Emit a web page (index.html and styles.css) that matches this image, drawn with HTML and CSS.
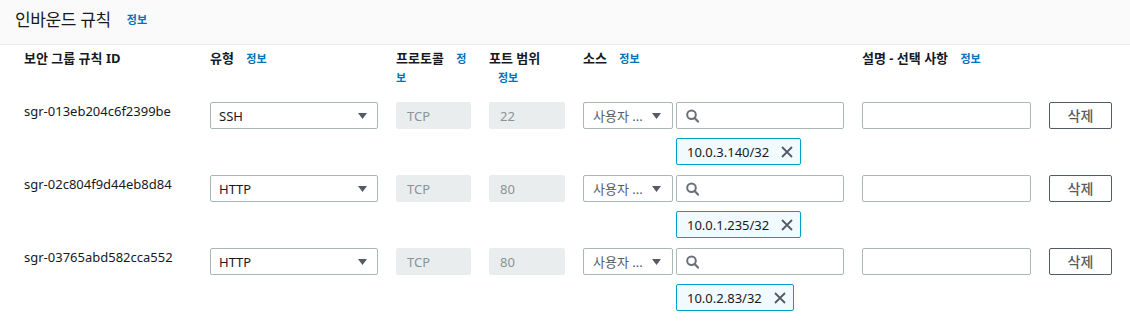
FILE: index.html
```html
<!DOCTYPE html>
<html lang="ko">
<head>
<meta charset="utf-8">
<title>인바운드 규칙</title>
<link rel="stylesheet" href="styles.css">
</head>
<body>
<div class="panel">
  <div class="panel-head">
    <h2 class="title">인바운드 규칙</h2>
    <span class="info head-info">정보</span>
  </div>
  <div class="rules">
    <div class="th">보안 그룹 규칙 ID</div>
    <div class="th">유형 <span class="info">정보</span></div>
    <div class="th">프로토콜 <span class="info">정보</span></div>
    <div class="th keep">포트 범위 <span class="info">정보</span></div>
    <div class="th">소스 <span class="info">정보</span></div>
    <div class="th">설명 - 선택 사항 <span class="info">정보</span></div>
    <div class="th"></div>

    <div class="rid">sgr-013eb204c6f2399be</div>
    <div class="select type"><span class="sel-text">SSH</span><svg class="caret" width="9" height="6" viewBox="0 0 9 6"><polygon points="0,0 9,0 4.5,6" fill="#545b64"/></svg></div>
    <div class="field disabled">TCP</div>
    <div class="field disabled">22</div>
    <div class="source">
      <div class="select src"><span class="sel-text">사용자 ...</span><svg class="caret" width="9" height="6" viewBox="0 0 9 6"><polygon points="0,0 9,0 4.5,6" fill="#545b64"/></svg></div>
      <div class="field search"><svg width="13" height="14" viewBox="0 0 13 14"><circle cx="5.5" cy="5.8" r="4.3" fill="none" stroke="#687078" stroke-width="2"/><line x1="8.6" y1="9" x2="12" y2="12.6" stroke="#687078" stroke-width="2.2" stroke-linecap="round"/></svg></div>
      <div class="token"><span>10.0.3.140/32</span><svg width="12" height="12" viewBox="0 0 12 12"><path d="M1 1L11 11M11 1L1 11" stroke="#545b64" stroke-width="1.8" fill="none"/></svg></div>
    </div>
    <div class="field desc"></div>
    <button class="btn">삭제</button>

    <div class="rid">sgr-02c804f9d44eb8d84</div>
    <div class="select type"><span class="sel-text">HTTP</span><svg class="caret" width="9" height="6" viewBox="0 0 9 6"><polygon points="0,0 9,0 4.5,6" fill="#545b64"/></svg></div>
    <div class="field disabled">TCP</div>
    <div class="field disabled">80</div>
    <div class="source">
      <div class="select src"><span class="sel-text">사용자 ...</span><svg class="caret" width="9" height="6" viewBox="0 0 9 6"><polygon points="0,0 9,0 4.5,6" fill="#545b64"/></svg></div>
      <div class="field search"><svg width="13" height="14" viewBox="0 0 13 14"><circle cx="5.5" cy="5.8" r="4.3" fill="none" stroke="#687078" stroke-width="2"/><line x1="8.6" y1="9" x2="12" y2="12.6" stroke="#687078" stroke-width="2.2" stroke-linecap="round"/></svg></div>
      <div class="token"><span>10.0.1.235/32</span><svg width="12" height="12" viewBox="0 0 12 12"><path d="M1 1L11 11M11 1L1 11" stroke="#545b64" stroke-width="1.8" fill="none"/></svg></div>
    </div>
    <div class="field desc"></div>
    <button class="btn">삭제</button>

    <div class="rid">sgr-03765abd582cca552</div>
    <div class="select type"><span class="sel-text">HTTP</span><svg class="caret" width="9" height="6" viewBox="0 0 9 6"><polygon points="0,0 9,0 4.5,6" fill="#545b64"/></svg></div>
    <div class="field disabled">TCP</div>
    <div class="field disabled">80</div>
    <div class="source">
      <div class="select src"><span class="sel-text">사용자 ...</span><svg class="caret" width="9" height="6" viewBox="0 0 9 6"><polygon points="0,0 9,0 4.5,6" fill="#545b64"/></svg></div>
      <div class="field search"><svg width="13" height="14" viewBox="0 0 13 14"><circle cx="5.5" cy="5.8" r="4.3" fill="none" stroke="#687078" stroke-width="2"/><line x1="8.6" y1="9" x2="12" y2="12.6" stroke="#687078" stroke-width="2.2" stroke-linecap="round"/></svg></div>
      <div class="token"><span>10.0.2.83/32</span><svg width="12" height="12" viewBox="0 0 12 12"><path d="M1 1L11 11M11 1L1 11" stroke="#545b64" stroke-width="1.8" fill="none"/></svg></div>
    </div>
    <div class="field desc"></div>
    <button class="btn">삭제</button>
  </div>
</div>
</body>
</html>
```

FILE: styles.css
```css
* { box-sizing: border-box; }

body {
  margin: 0;
  background: #ffffff;
  color: #16191f;
  font-family: "Noto Sans", "Noto Sans CJK KR", sans-serif;
  font-size: 13px;
}

.panel-head {
  height: 45px;
  background: #fafafa;
  border-bottom: 1px solid #eaeded;
  display: flex;
  align-items: center;
  padding: 0 0 6px 15px;
}

.title {
  margin: 0;
  font-size: 17px;
  letter-spacing: -0.4px;
  font-weight: 400;
  line-height: 22px;
  color: #16191f;
  font-family: "Noto Sans CJK KR", sans-serif;
}

.info {
  font-family: "Noto Sans CJK KR", sans-serif;
  font-size: 11px;
  font-weight: 700;
  color: #0073bb;
  padding-left: 9px;
}

.head-info {
  padding-left: 16px;
  line-height: 22px;
}

.rules {
  display: grid;
  grid-template-columns: 168px 168px 75px 76px 261px 169px 63px;
  column-gap: 18px;
  row-gap: 10px;
  padding: 4px 0 0 24px;
  align-items: start;
}

.th {
  font-family: "Noto Sans", "Noto Sans CJK KR", sans-serif;
  font-size: 13px;
  font-weight: 700;
  line-height: 19px;
  padding-bottom: 5px;
  color: #16191f;
}

.keep {
  word-break: keep-all;
}

.rid {
  line-height: 18px;
  color: #16191f;
}

.select,
.field {
  height: 27px;
  border: 1px solid #aab7b8;
  border-radius: 2px;
  background: #ffffff;
  display: flex;
  align-items: center;
}

.select {
  justify-content: space-between;
  padding: 0 10px 0 8px;
}

.type {
  width: 168px;
}

.sel-text {
  white-space: nowrap;
  color: #16191f;
}

.source {
  display: grid;
  grid-template-columns: 90px 168px;
  column-gap: 3px;
  row-gap: 9px;
  align-items: start;
  justify-items: start;
}

.src {
  width: 90px;
  padding: 0 11px 0 9px;
}

.src .sel-text {
  color: #545b64;
}

.disabled {
  background: #eaeded;
  border-color: #eaeded;
  color: #879596;
  padding-left: 10px;
}

.search {
  width: 168px;
  padding-left: 9px;
}

.token {
  grid-column: 2;
  height: 27px;
  display: inline-flex;
  align-items: center;
  gap: 12px;
  padding: 0 7px 0 10px;
  border: 1px solid #00a1c9;
  border-radius: 2px;
  background: #f1faff;
  color: #16191f;
}

.btn {
  height: 27px;
  width: 63px;
  border: 1px solid #545b64;
  border-radius: 2px;
  background: #ffffff;
  color: #545b64;
  font-family: "Noto Sans CJK KR", sans-serif;
  font-size: 14px;
  font-weight: 500;
  padding: 0;
  line-height: 25px;
}
```
